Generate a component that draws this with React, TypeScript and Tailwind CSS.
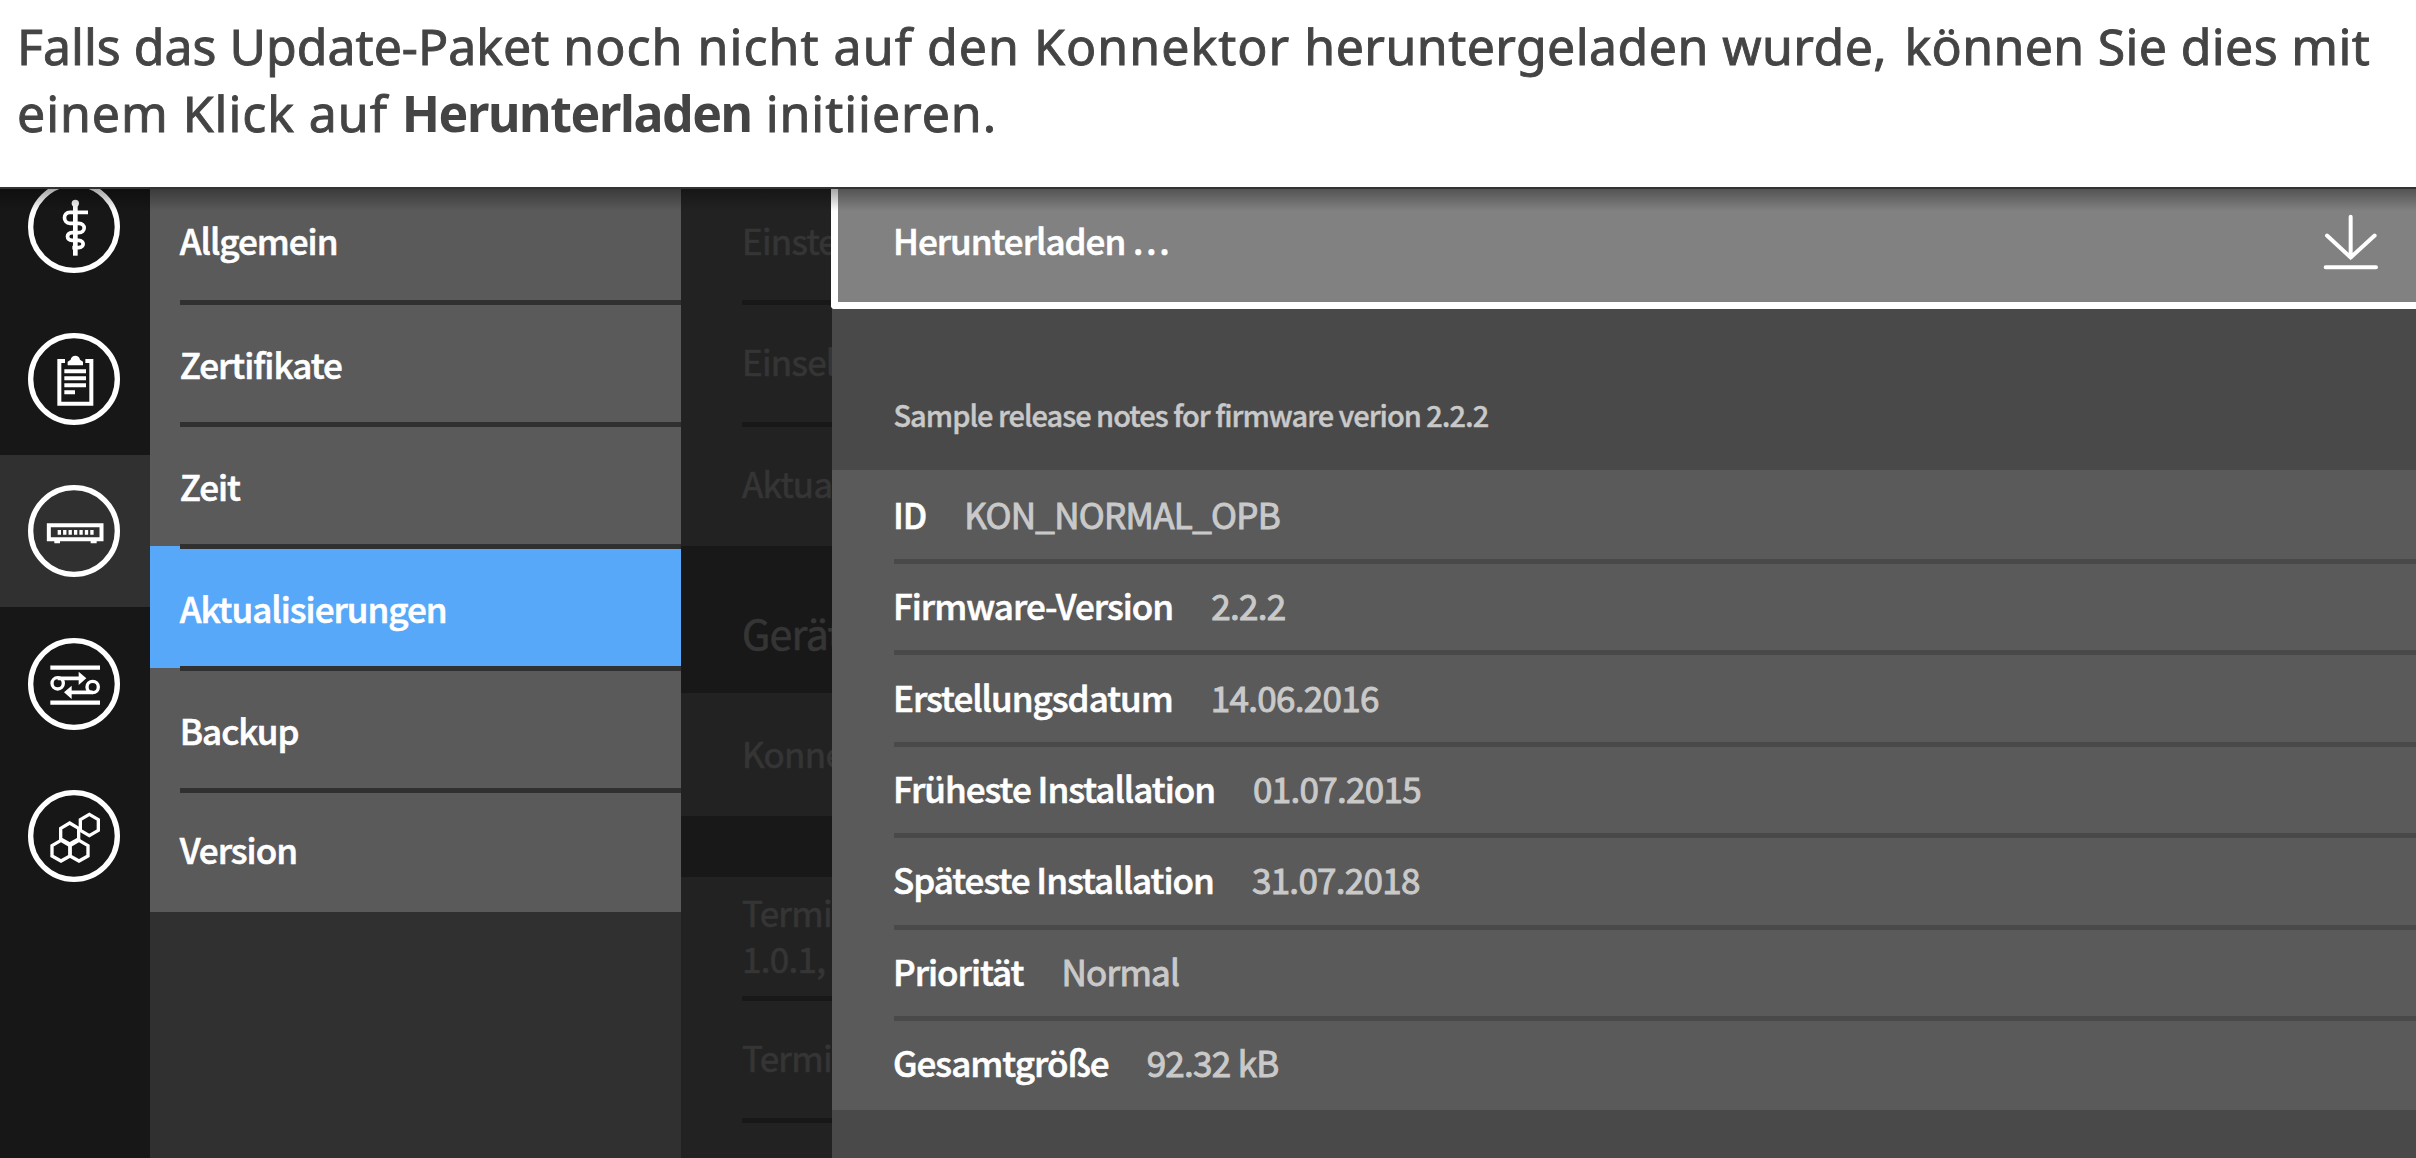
import type { ReactNode } from "react";

function RoundIcon({ children }: { children: ReactNode }) {
  return (
    <svg viewBox="0 0 276 276" className="size-[92px]" fill="none" stroke="#fff" strokeWidth="11">
      <circle cx="138" cy="138" r="130" strokeWidth="16" />
      {children}
    </svg>
  );
}

function StaffIcon() {
  return (
    <RoundIcon>
      <circle cx="142" cy="67" r="11" fill="#fff" stroke="none" />
      <path d="M142 67V224" strokeWidth="14" />
      <path d="M180 94H126C104 94 104 127 126 127H152C174 127 174 155 152 155H132C114 155 114 178 132 178H152C170 178 170 200 152 200H133" strokeWidth="11" />
    </RoundIcon>
  );
}

function ClipboardIcon() {
  return (
    <RoundIcon>
      <path d="M111 84H94V212H190V84H172" strokeWidth="12" />
      <path d="M119 97V86L128 80C130 64 154 64 156 80L165 86V97Z" fill="#fff" stroke="none" />
      <path d="M109 115H174M109 136H174M109 157H174M109 178H141" strokeWidth="12" />
    </RoundIcon>
  );
}

function DeviceIcon() {
  return (
    <RoundIcon>
      <path d="M62.5 121H220.5V163H62.5Z" strokeWidth="12" />
      <path d="M89 142H197" strokeDasharray="10 6.3" strokeWidth="14" />
      <path d="M79 171H96M188 171H206" strokeWidth="8" />
    </RoundIcon>
  );
}

function FlowIcon() {
  return (
    <RoundIcon>
      <path d="M67 89H216M67 194H216" strokeWidth="13" />
      <circle cx="89" cy="136" r="17" strokeWidth="10" />
      <circle cx="194" cy="147" r="17" strokeWidth="10" />
      <path d="M89 121H156M194 163H128" strokeWidth="11" />
      <path d="M152 101L175 121L152 141ZM131 143L108 163L131 183Z" fill="#fff" stroke="none" />
    </RoundIcon>
  );
}

function HexIcon() {
  return (
    <RoundIcon>
      <g strokeWidth="10">
        <path d="M184 73L211 89V121L184 137L157 121V89Z" />
        <path d="M125 99L152 115V147L125 162L98 147V115Z" />
        <path d="M99 151L126 167V198L99 213L72 198V167Z" />
        <path d="M153 151L180 167V198L153 213L126 198V167Z" />
      </g>
    </RoundIcon>
  );
}

function DownloadIcon() {
  return (
    <svg viewBox="0 0 168 170" className="mt-[5px] h-[57px] w-[56px]" fill="none" stroke="#fff" strokeWidth="12" strokeLinecap="round">
      <path d="M83 8V130M12 64L83 130L155 64M8 159H159" />
    </svg>
  );
}

const railIcons = [StaffIcon, ClipboardIcon, DeviceIcon, FlowIcon, HexIcon];

const menu = [
  { label: "Allgemein", cls: "h-[115px] pb-2.5" },
  { label: "Zertifikate", cls: "h-[122px] pt-0.5" },
  { label: "Zeit", cls: "h-[122px] pt-0.5" },
  { label: "Aktualisierungen", cls: "h-[122px] pt-0.5 bg-[#57a8f9]" },
  { label: "Backup", cls: "h-[122px] pt-0.5" },
  { label: "Version", cls: "h-[122px] pb-1" },
];

const details = [
  ["ID", "KON_NORMAL_OPB"],
  ["Firmware-Version", "2.2.2"],
  ["Erstellungsdatum", "14.06.2016"],
  ["Früheste Installation", "01.07.2015"],
  ["Späteste Installation", "31.07.2018"],
  ["Priorität", "Normal"],
  ["Gesamtgröße", "92.32 kB"],
];

function DimRow({ children, cls, line }: { children?: ReactNode; cls: string; line?: boolean }) {
  return (
    <div className={`relative flex shrink-0 items-center pl-[61px] whitespace-nowrap ${cls}`}>
      {children}
      {line && <div className="absolute right-0 -bottom-[3px] left-[61px] z-10 h-[5px] bg-[#181818]" />}
    </div>
  );
}

export default function App() {
  return (
    <div className="flex h-[1158px] w-[2416px] flex-col overflow-hidden bg-white">
      <p className="h-[187px] shrink-0 pt-[13px] pl-[17px] font-['Noto_Sans'] text-[50px] leading-[67px] whitespace-nowrap text-[#444] [-webkit-text-stroke:0.9px_#444]">
        <span className="block">
          Falls das Update-Paket
          <span className="tracking-[1.05px]"> noch nicht auf den Konnektor </span>
          <span className="tracking-[0.45px]">heruntergeladen wurde,</span>
          <span className="ml-1 tracking-[0.35px]"> können Sie dies mit</span>
        </span>
        <span className="block tracking-[0.95px]">
          einem Klick auf <b className="tracking-[-1.4px] [-webkit-text-stroke:0px]">Herunterladen</b> initiieren.
        </span>
      </p>

      <div className="relative flex flex-1 overflow-hidden bg-[#494949] font-['Noto_Sans_CJK_SC',sans-serif] text-[35px] leading-[46px] tracking-[-1px] text-white">
        <nav className="w-[149.7px] shrink-0 bg-[#171717]">
          <div className="-mt-[37.2px] flex flex-col">
            {railIcons.map((Icon, i) => (
              <div key={i} className={`flex h-[152.4px] items-center pt-px pl-7 ${i === 2 ? "bg-[#303030]" : ""}`}>
                <Icon />
              </div>
            ))}
          </div>
        </nav>

        <div className="w-[531.3px] shrink-0 bg-[#303030] font-medium [-webkit-text-stroke:0.6px_#fff]">
          {menu.map((m, i) => (
            <div key={m.label} className={`relative flex items-center pl-[30px] ${i === 3 ? "" : "bg-[#5a5a5a]"} ${m.cls}`}>
              {m.label}
              {i < 5 && <div className="absolute right-0 -bottom-[3px] left-[30.5px] z-10 h-[5px] bg-[#303030]" />}
            </div>
          ))}
        </div>

        <div className="flex w-[151.5px] shrink-0 flex-col overflow-hidden bg-[#222] tracking-[-0.7px] text-[#353535] [-webkit-text-stroke:0.7px_#353535]">
          <DimRow cls="h-[115px] pb-2.5" line>Einste</DimRow>
          <DimRow cls="h-[122px] pb-1" line>Einsel</DimRow>
          <DimRow cls="h-[122px] pb-1">Aktua</DimRow>
          <DimRow cls="h-[147px] bg-[#181818] pt-6 text-[41px]">Gerät</DimRow>
          <DimRow cls="h-[122.5px] pb-0.5">Konne</DimRow>
          <DimRow cls="h-[61px] bg-[#181818]" />
          <DimRow cls="h-[121px] pb-1" line>
            <span>Termi<br />1.0.1,</span>
          </DimRow>
          <DimRow cls="h-[122px] pb-1" line>Termi</DimRow>
        </div>

        <main className="relative z-10 flex flex-1 flex-col bg-[#494949]">
          <button className="-ml-[1.5px] flex h-[122px] shrink-0 items-center justify-between rounded-bl-[4px] border-b-7 border-l-7 border-white bg-[#818181] pr-[37px] pb-2.5 pl-[55px] text-left font-medium [-webkit-text-stroke:0.6px_#fff]">
            Herunterladen …
            <DownloadIcon />
          </button>
          <div className="flex h-[161px] shrink-0 items-end pb-[33px] pl-[61px] text-[29px] leading-[46px] font-medium tracking-[-1px] text-[#c9c9c9] [-webkit-text-stroke:0.4px_#c9c9c9]">
            Sample release notes for firmware verion 2.2.2
          </div>
          <dl className="flex h-[640px] shrink-0 flex-col bg-[#5a5a5a]">
            {details.map(([k, v], i) => (
              <div key={k} className="relative flex flex-1 items-center gap-[38px] pb-1 pl-[60.5px]">
                <dt className="font-medium [-webkit-text-stroke:0.6px_#fff]">{k}</dt>
                <dd className="tracking-[-0.7px] text-[#c9c9c9] [-webkit-text-stroke:1px_#c9c9c9]">{v}</dd>
                {i < 6 && <div className="absolute right-0 -bottom-[2.5px] left-[61.5px] z-10 h-[5px] bg-[#494949]" />}
              </div>
            ))}
          </dl>
        </main>

        <div className="pointer-events-none absolute inset-x-0 top-0 z-20 h-6 border-t-2 border-[#333] bg-linear-to-b from-black/35 to-transparent" />
      </div>
    </div>
  );
}
